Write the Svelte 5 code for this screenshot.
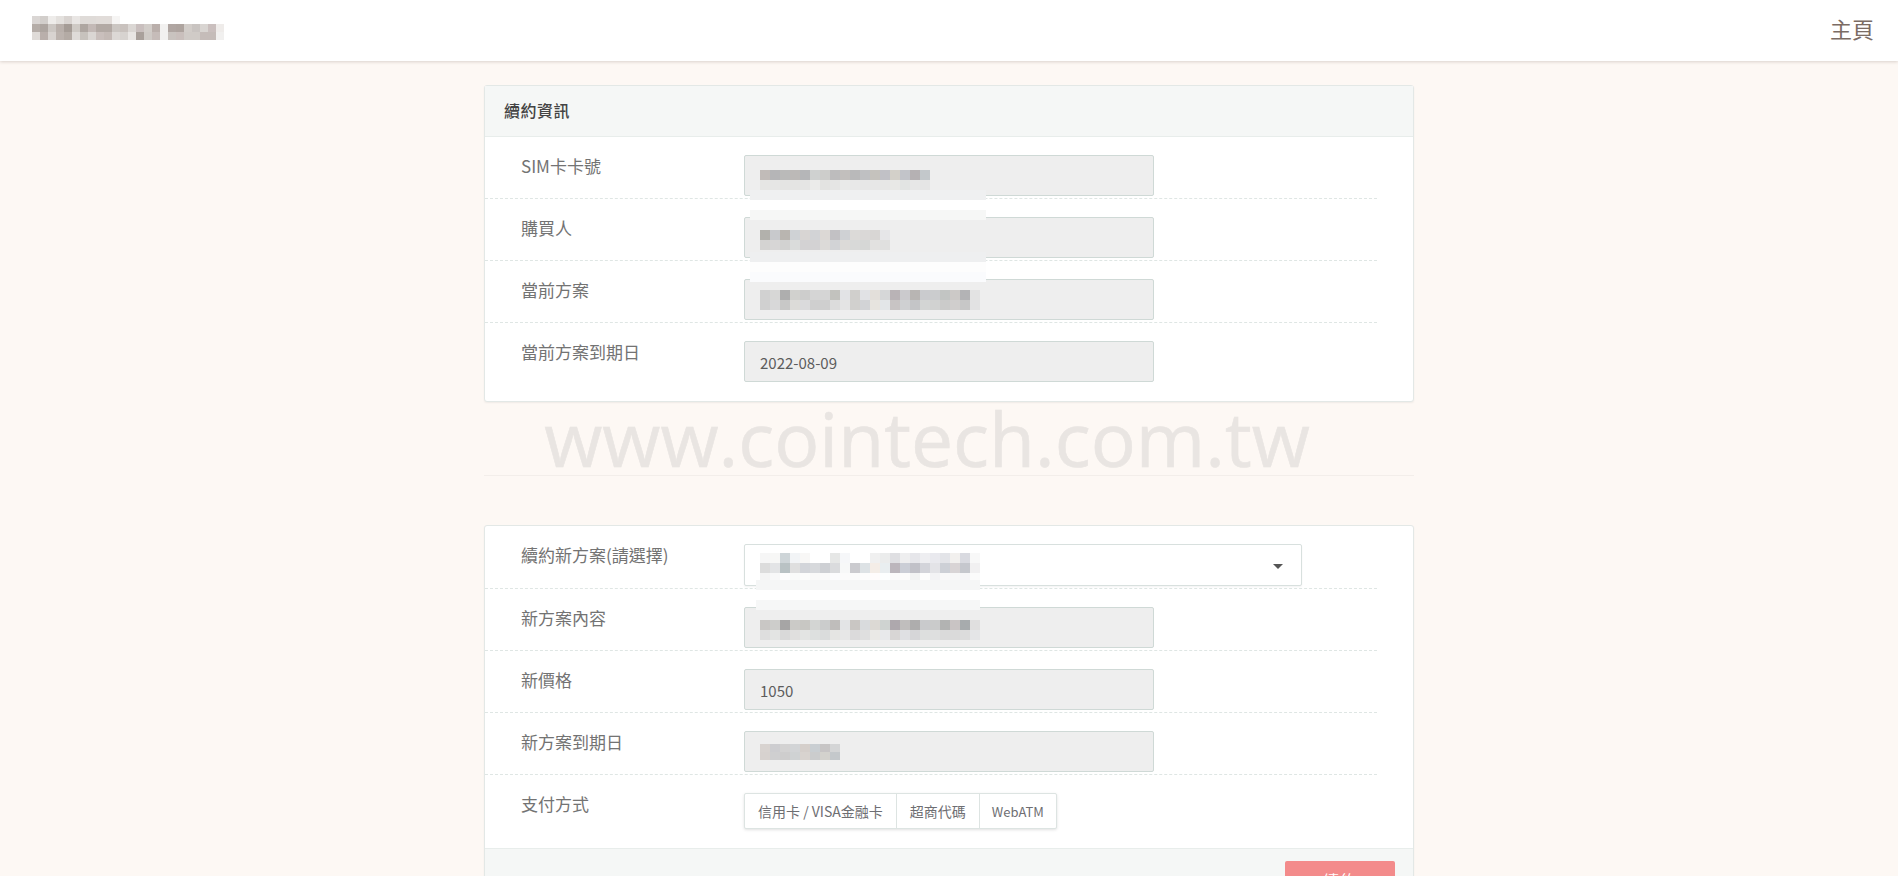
<script>
  // pixelated (redacted) text, one string of hex shades per mosaic row
  const parse = (rows) => rows.map((r) => r.split(' ').map((c) => '#' + c));

  const brand = parse([
    'dad6d4 d2cecb eeecea e4e1de d9d4d1 e9e6e4 dfdbd8 dfdbd8 e1dcd9 e1dcd9 f6f5f4',
    'b5ada8 ada5a0 ccc7c3 b9b0ab a59c96 cfcac5 aea6a1 c3b9b6 b2a9a4 b2a9a4 cbc6c2 c9c2be dbd7d4 c9bfbe d2cdc9 baafab f2f1f0 b0a6a2 aea49f d2cdc9 c9c4c1 d9d5d2 cabfbe efecea',
    'dfdbd8 b9afab d8d3d0 bcb3ae b4aba5 dfdbd8 c7c2bd dad6d3 c9bfbc c4bab6 dcd8d5 d7d3d0 e9e6e4 a9a09b cfcac6 c6bcb9 f2f1f0 c9c3bf c9bfbc d0cbc7 d0cbc7 c5bcb9 c5bcb9 f1f0ef'
  ]);
  const sim = parse([
    'c1bbb8 b5b5b7 babab9 bcb9b7 b5b6b8 cfd1d0 cdcdcb bdbcbd c2bfbd b9b9ba bfc0c2 c5c2bd c1c1c6 d3d0c9 c2c4c9 b5b1b3 c3c8cb',
    'e6e6e4 e6e6e5 e4e4e3 e4e4e3 e5e5e4 ebebea e3e3e1 e5e5e4 e9eae9 e8e8e8 e7e7e7 e7e7e7 e7e7e6 e8e8e6 e2e4e3 e7e7e7 e5e5e5'
  ]);
  const buyer = parse([
    'b2b1ac c8c9cc b9b5b0 cfd2d5 d8d5d3 d2d3d6 dcd8d5 c2c1c4 cfd1d4 dcdad8 dad8d7 d8d6d4 e6e6e8',
    'd4d3d2 d7d6d6 d2d2d1 dadcdb d3d2d3 d3d2d3 dcdad8 d2d3d6 dcdad8 d8d9d8 d6d7d6 e2e1e0 e0e0df'
  ]);
  const plan = parse([
    'd1d1d1 d7d7d6 aeaeae d1d1ce cdcdcc d5d5d5 d5d5d5 c2c2be e2e3e6 d0cfcc e1e2e5 e3dfda d6d7d8 b9b3b6 cbcacd b8b5b3 cacbce cbccce c2c5c3 ccc9c7 b3b3b5 e3e3e3',
    'd0d0d0 d8d8d9 c8c8c7 dcdbd8 dadadc cfcfcf cfcfcf dcdcdc e4e4e4 d1d0ce d2d3d6 e7e4df e3e6e8 c8c4c4 cfd0d2 c4c5c7 d3d5d4 d1d2d1 cbcbca d0cecd c7c7c7 e2e2e3'
  ]);
  const renew = parse([
    'f6f6f6 f7f7f6 ced5d8 f2f4f6 f8f7f6 ffffff ffffff e6e7e6 f6f7f9 ffffff ffffff f0f0f0 ebecec dfdfe2 eeeeef e6e6ea eeeef1 e9e9ee e3e4e8 f2f0ee d9dae0 f8f8f8',
    'dcdcdc e3e4e6 b9c2c4 dfdfdf d3d5da d7d9dc ced0d4 dadbdd f7f8f8 cbcbcf dde2e5 f4ede7 e9eef0 bcb6bc cbced6 c1c1c8 d3d4da e3e3e7 cdd0d6 d9d4d5 c5c7cd f1f0f1',
    'f4f4f4 f8f8f9 fdfdfd f9faf9 fcfcfc f9f9f8 fafafa fcfcfd fbfbfb fbfbfb fcfcfc fffcfc fdffff fbfafa fcfcfb f2f3f3 fdfdfd f3f3f5 f9f9f9 f8f7f7 f5f5f7 fbfbfb'
  ]);
  const content = parse([
    'c9c7c5 cdcdcb a6a5a5 cbcac7 c8c7c3 d3d5d3 cbcccc bfbdbb e3e4e6 c9c6c3 d9dbdd dcd9d4 cfd3d1 aea8ad c0bebd aeadad c9cacc cacbcb b2b3b2 c9c4c4 a7abad e0dfdf',
    'dedede e3e4e3 d9d9d9 e0dfde e3e4e3 dde0df dadcdc e5e5e3 e7e7e7 dbdadb dfdfdf eae9e6 e8e9eb d8d6d5 dfe0e3 d6d6d8 dddfde dedfdf dadada dadada dcdcdc e4e5e7'
  ]);
  const expiry = parse([
    'd8d3d0 cdcdd0 d3d2d2 d2d4d6 d5cfcb c9ced2 c7c5c5 d4d5d6',
    'd7d2cf cfcfd0 cecdcd cfd2d3 d8d3cf cbcccd d3d2cd c4c8cb'
  ]);

  const currentRows = [
    { label: 'SIM卡卡號', mosaic: sim, top: 14, strip: ['#eff0f1', '#ffffff', '#f6f7f6'] },
    { label: '購買人', mosaic: buyer, top: 12, strip: ['#eeeff0', '#fdfdfd', '#fafbfd'] },
    { label: '當前方案', mosaic: plan, top: 10 },
    { label: '當前方案到期日', value: '2022-08-09' }
  ];
  const newRows = [
    { label: '新方案內容', mosaic: content, top: 12 },
    { label: '新價格', value: '1050' },
    { label: '新方案到期日', mosaic: expiry, top: 12, cellH: 8 }
  ];
  const payments = ['信用卡 / VISA金融卡', '超商代碼', 'WebATM'];
</script>

{#snippet pixels(rows, cellH = 10)}
  <div class="mosaic">
    {#each rows as row}
      <div class="mosaic-row">
        {#each row as shade}
          <i style="background:{shade};height:{cellH}px"></i>
        {/each}
      </div>
    {/each}
  </div>
{/snippet}

{#snippet strip(shades, cls = '')}
  <div class="strip {cls}">
    {#each shades as shade}
      <i style="background:{shade}"></i>
    {/each}
  </div>
{/snippet}

{#snippet readonlyRow(row)}
  <div class="row">
    <span class="label">{row.label}</span>
    <div class="field">
      <div class="input">
        {#if row.mosaic}
          <div class="mosaic-wrap" style="padding-top:{row.top}px">
            {@render pixels(row.mosaic, row.cellH)}
          </div>
        {:else}
          {row.value}
        {/if}
      </div>
      {#if row.strip}
        {@render strip(row.strip)}
      {/if}
    </div>
  </div>
{/snippet}

<header class="topbar">
  <div class="brand">{@render pixels(brand, 8)}</div>
  <a class="home" href="#home">主頁</a>
</header>

<main class="page">
  <div class="watermark">www.cointech.com.tw</div>

  <section class="card">
    <div class="card-head">續約資訊</div>
    <div class="card-body">
      {#each currentRows as row}
        {@render readonlyRow(row)}
      {/each}
    </div>
  </section>

  <hr class="divider" />

  <section class="card second">
    <div class="card-body">
      <div class="row select-row">
        <span class="label">續約新方案(請選擇)</span>
        <div class="field">
          <div class="select">
            <div class="mosaic-wrap">{@render pixels(renew)}</div>
            <span class="caret"></span>
          </div>
          {@render strip(['#f5f6f6', '#ffffff', '#f6f7f7'], 'strip-select')}
        </div>
      </div>
      {#each newRows as row}
        {@render readonlyRow(row)}
      {/each}
      <div class="row last">
        <span class="label">支付方式</span>
        <div class="segments">
          {#each payments as p}
            <button type="button" class="segment">{p}</button>
          {/each}
        </div>
      </div>
    </div>
    <div class="card-foot">
      <button type="button" class="submit">續約</button>
    </div>
  </section>
</main>

<style>
  :global(body) {
    background: #fdf8f4;
    overflow: hidden;
    font-family: "Noto Sans CJK TC", "Noto Sans", sans-serif;
    color: #666;
  }

  .topbar {
    height: 61px;
    background: #fff;
    box-shadow: 0 1px 3px rgba(120, 100, 90, 0.25);
    display: flex;
    align-items: center;
    justify-content: space-between;
    padding: 0 24px 5px 32px;
    box-sizing: border-box;
    position: relative;
  }
  .brand {
    align-self: flex-start;
    padding-top: 16px;
  }
  .home {
    color: #7b6c64;
    font-size: 22px;
    text-decoration: none;
  }

  .page {
    position: relative;
    width: 930px;
    margin: 24px auto 0;
  }
  .watermark {
    position: absolute;
    top: 303px;
    left: 0;
    right: 44px;
    text-align: center;
    font-family: "Open Sans", sans-serif;
    font-weight: 500;
    font-size: 75px;
    line-height: 100px;
    color: #e9e5e2;
    -webkit-text-stroke: 0.6px #e9e5e2;
    pointer-events: none;
  }

  .card {
    background: #fff;
    border: 1px solid #e3e8e6;
    border-radius: 3px;
    box-shadow: 0 1px 2px rgba(0, 0, 0, 0.06);
  }
  .second {
    margin-top: 49px;
  }
  .card-head {
    height: 48px;
    padding: 0 0 2px 19px;
    background: #f5f7f6;
    border-bottom: 1px solid #e8edeb;
    display: flex;
    align-items: center;
    font-size: 16px;
    font-weight: 500;
    letter-spacing: 0.5px;
    color: #444;
  }
  .card-body {
    margin-right: 36px;
  }

  .row {
    display: flex;
    height: 62px;
    box-sizing: border-box;
    padding-top: 18px;
    border-bottom: 1px dashed #dfe6e4;
  }
  .card-head + .card-body .row:last-child {
    border-bottom: 0;
    height: 78px;
  }
  .select-row {
    height: 63px;
  }
  .last {
    border-bottom: 0;
    height: 73px;
  }
  .label {
    width: 259px;
    padding-left: 36px;
    padding-top: 1px;
    box-sizing: border-box;
    font-size: 17px;
    line-height: 20px;
    color: #737373;
  }
  .field {
    position: relative;
    width: 410px;
    height: 41px;
  }
  .input {
    height: 41px;
    box-sizing: border-box;
    background: #eeeeee;
    border: 1px solid #cfd9d6;
    border-radius: 2px;
    padding-left: 15px;
    font-size: 15px;
    line-height: 41px;
    color: #5c5c5c;
  }
  .mosaic-wrap {
    line-height: 0;
  }
  .mosaic-row {
    display: flex;
  }
  .mosaic-row i {
    display: block;
    width: 10px;
    flex: none;
  }
  .brand .mosaic-row i {
    width: 8px;
  }

  .strip {
    position: absolute;
    z-index: 1;
    left: 6px;
    top: 35px;
    width: 236px;
  }
  .strip i {
    display: block;
    height: 10px;
  }
  .strip-select {
    left: 12px;
    top: 36px;
    width: 224px;
  }

  .select {
    position: relative;
    width: 558px;
    height: 42px;
    box-sizing: border-box;
    background: #fff;
    border: 1px solid #d8e0de;
    border-radius: 2px;
    padding: 8px 0 0 15px;
    box-shadow: 0 1px 2px rgba(0, 0, 0, 0.05);
  }
  .caret {
    position: absolute;
    right: 18px;
    top: 19px;
    width: 0;
    height: 0;
    border: 5px solid transparent;
    border-top: 5px solid #555;
    border-bottom: 0;
  }

  .segments {
    display: flex;
    height: 36px;
    box-sizing: border-box;
    background: #fff;
    border: 1px solid #dde4e2;
    border-radius: 2px;
    box-shadow: 0 1px 3px rgba(0, 0, 0, 0.12);
  }
  .segment {
    font: inherit;
    font-size: 14px;
    color: #6e6e72;
    background: none;
    border: 0;
    border-right: 1px solid #dde4e2;
    padding: 0 13px;
    white-space: nowrap;
  }
  .segment:last-child {
    border-right: 0;
    font-size: 13px;
    padding: 0 12px;
  }

  .card-foot {
    background: #f5f7f6;
    border-top: 1px solid #e8edeb;
    padding: 12px 18px 12px 0;
    display: flex;
    justify-content: flex-end;
  }
  .submit {
    width: 110px;
    height: 38px;
    font: inherit;
    font-size: 16px;
    letter-spacing: 1px;
    color: #fff;
    background: #f38b8b;
    border: 0;
    border-radius: 2px;
  }

  .divider {
    border: 0;
    border-top: 1px solid #f3eeea;
    margin: 73px 0 0;
  }
</style>
